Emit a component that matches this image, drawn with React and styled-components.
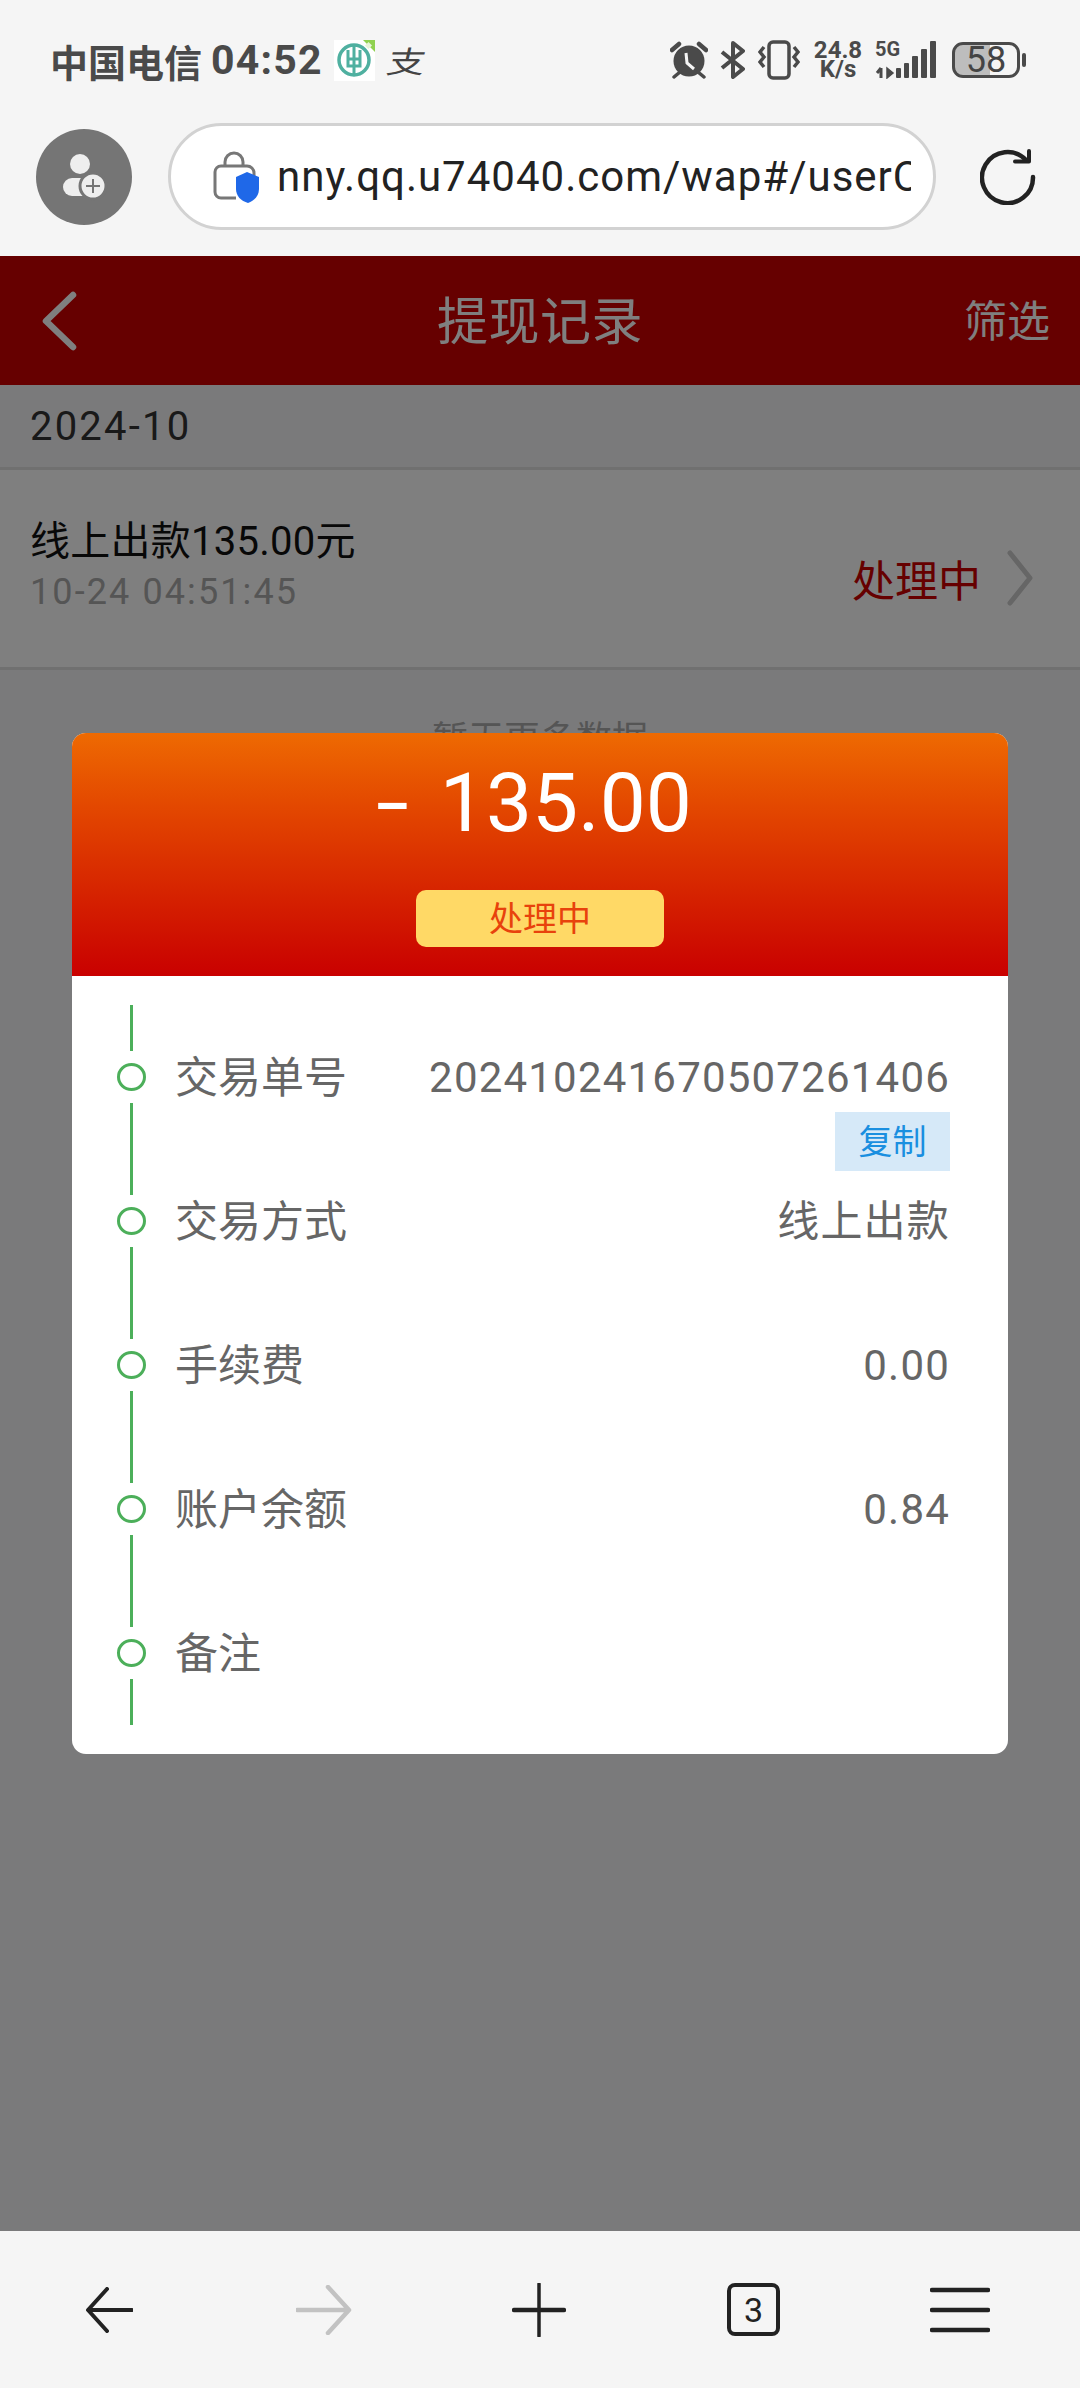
import React from "react";
import styled, { createGlobalStyle } from "styled-components";

const Global = createGlobalStyle`
  html, body { margin: 0; padding: 0; background: #f5f5f5; }
  * { box-sizing: border-box; }
`;

const Screen = styled.div`
  width: 1080px; height: 2388px; display: flex; flex-direction: column; overflow: hidden;
  font-family: Roboto, "Noto Sans CJK SC", sans-serif; background: #f5f5f5;
`;
const StatusBar = styled.div`
  height: 120px; display: flex; align-items: center; padding: 0 54px 0 50px; color: #4a4a4a;
`;
const Carrier = styled.span`font-size: 38px; font-weight: 700; white-space: nowrap;`;
const Clock = styled.span`font-size: 41px; font-weight: 700; margin-left: 9px; letter-spacing: 1.2px; white-space: nowrap;`;
const AppBadge = styled.span`
  width: 41px; height: 41px; margin-left: 11px; background: #fff; display: flex;
`;
const AppGlyph = styled.span`
  margin-left: 13px; font-size: 38px; line-height: 40px; color: #444; font-family: "Noto Sans CJK SC", sans-serif;
  display: inline-block; transform: scaleY(.8) skewX(-10deg);
`;
const StatusRight = styled.div`margin-left: auto; display: flex; align-items: center;`;
const Speed = styled.div`
  width: 52px; margin-left: 12px; text-align: center; font-size: 24px; line-height: 19px; font-weight: 700; color: #4a4a4a;
`;
const Net = styled.div`position: relative; width: 62px; height: 38px; margin-left: 11px;`;
const NetLabel = styled.span`
  position: absolute; left: 0; top: -2px; font-size: 20px; line-height: 20px; font-weight: 700; color: #4a4a4a;
`;
const Battery = styled.div`
  position: relative; width: 68px; height: 36px; margin-left: 15px; border: 3px solid #4a4a4a; border-radius: 11px;
  display: flex; align-items: center; justify-content: center; overflow: hidden;
  font-size: 36px; color: #444; font-weight: 400;
  background: linear-gradient(90deg, #bdbdbd 56%, transparent 56%);
`;
const BatteryNub = styled.span`width: 4px; height: 14px; margin-left: 2px; border-radius: 2px; background: #4a4a4a;`;

const BrowserBar = styled.div`
  height: 136px; display: flex; align-items: flex-start; padding: 3px 44px 0 36px;
`;
const Avatar = styled.div`
  width: 96px; height: 96px; margin-top: 6px; border-radius: 50%; background: #757575;
  display: flex; align-items: center; justify-content: center;
`;
const UrlPill = styled.div`
  width: 768px; height: 107px; margin-left: 36px; border: 3px solid #d2d2d2; border-radius: 54px; background: #fff;
  display: flex; align-items: center; padding: 0 21px 0 42px;
`;
const UrlText = styled.div`
  width: 634px; margin-left: 18px; overflow: hidden; white-space: nowrap; font-size: 42px; letter-spacing: 1px; color: #222;
`;
const Refresh = styled.div`margin-left: 44px; margin-top: 26px; display: flex;`;

const Page = styled.div`
  position: relative; flex: 1; display: flex; flex-direction: column; background: #f5f5f7; overflow: hidden;
`;
const Header = styled.div`
  height: 129px; background: #cc0000; display: grid; grid-template-columns: 1fr auto 1fr; align-items: center; color: #fff;
  padding: 0 30px 6px 30px;
`;
const Title = styled.div`font-size: 51px; text-align: center; letter-spacing: 0.5px;`;
const Filter = styled.div`font-size: 43px; text-align: right;`;
const BackSlot = styled.div`display: flex; padding: 6px 0 0 10px;`;
const MonthRow = styled.div`
  height: 85px; padding-left: 30px; display: flex; align-items: center; font-size: 40px; letter-spacing: 2.2px; color: #333;
  background: #f5f5f7; border-bottom: 3px solid #e0e0e0;
`;
const RecordRow = styled.div`
  height: 200px; padding: 0 47px 0 30px; display: flex; align-items: center; background: #fff; border-bottom: 3px solid #e0e0e0;
`;
const RecordMain = styled.div`flex: 1; display: flex; flex-direction: column; margin-top: -4px;`;
const RecordTitle = styled.div`font-size: 40px; line-height: 50px; letter-spacing: 0.25px; color: #111;`;
const RecordTime = styled.div`font-size: 36px; line-height: 50px; letter-spacing: 2.1px; color: #aaa;`;
const RecordStatus = styled.div`font-size: 43px; color: #cc0000; margin-right: 26px; margin-top: 18px;`;
const ChevronSlot = styled.div`display: flex; margin-top: 18px;`;
const NoMore = styled.div`
  margin-top: 45px; text-align: center; font-size: 36px; line-height: 50px; color: #aaa;
`;
const Overlay = styled.div`
  position: absolute; inset: 0; background: rgba(0,0,0,.5); display: flex; flex-direction: column; align-items: center; padding-top: 477px;
`;
const Dialog = styled.div`
  width: 936px; border-radius: 14px; overflow: hidden; background: #fff;
`;
const DialogHead = styled.div`
  height: 243px; padding-top: 20px; display: flex; flex-direction: column; align-items: center;
  background: linear-gradient(180deg, #ee6a02 0%, #e44a00 28%, #c90000 100%);
`;
const Amount = styled.div`display: flex; font-size: 82px; line-height: 100px; color: #fff; margin-left: -12px; white-space: pre;`;
const Minus = styled.span`display: inline-block; transform: scaleX(1.45); transform-origin: left center; margin-right: 41px;`;
const Tag = styled.div`
  width: 248px; height: 57px; margin-top: 37px; padding-bottom: 5px; border-radius: 10px; background: #ffd966; color: #e8420c;
  display: flex; align-items: center; justify-content: center; font-size: 34px;
`;
const DialogBody = styled.div`padding: 29px 58px 29px 45px;`;
const Row = styled.div`height: 144px; display: flex;`;
const Track = styled.div`width: 29px; display: flex; flex-direction: column; align-items: center;`;
const Line = styled.div`flex: 1; width: 3px; background: #4caf5a;`;
const Dot = styled.div`
  width: 29px; height: 28px; margin: 12px 0; border: 3px solid #4caf5a; border-radius: 50%;
`;
const RowContent = styled.div`
  flex: 1; margin-left: 29px; padding-top: 49px; display: flex; justify-content: space-between; align-items: flex-start;
`;
const Label = styled.div`font-size: 43px; line-height: 48px; color: #666;`;
const ValueCol = styled.div`display: flex; flex-direction: column; align-items: flex-end;`;
const Value = styled.div`font-size: 42px; line-height: 48px; color: #666; letter-spacing: 1.2px;`;
const CopyBtn = styled.div`
  width: 115px; height: 59px; margin-top: 10px; padding-bottom: 5px; background: #d6e9f8; color: #1a8fe0; font-size: 34px;
  display: flex; align-items: center; justify-content: center;
`;
const BottomNav = styled.div`
  height: 157px; background: #f5f5f5; display: flex; align-items: center; padding-left: 1px;
`;
const NavSlot = styled.div`
  width: ${p => p.$w || 215}px; display: flex; justify-content: center; align-items: center;
`;
const TabBox = styled.div`
  width: 53px; height: 53px; border: 4px solid #222; border-radius: 8px; display: flex; align-items: center; justify-content: center;
  font-size: 34px; color: #222;
`;

const BankLogo = () => (
  <svg width="41" height="41" viewBox="0 0 41 41">
    <circle cx="20" cy="20" r="15" fill="none" stroke="#4fb0a0" strokeWidth="3.5" />
    <path d="M20 5v30M14 10v16h12V10M14 19h12" fill="none" stroke="#4fb0a0" strokeWidth="3" />
    <path d="M29 0h12v12z" fill="#8fd14f" />
    <rect x="32" y="3" width="5" height="5" fill="#e8f5d8" transform="rotate(45 34.5 5.5)" />
  </svg>
);
const Alarm = () => (
  <svg width="38" height="38" viewBox="0 0 38 38">
    <circle cx="19" cy="20" r="15.500" fill="#4a4a4a" />
    <path d="M2 9 9 3M36 9 29 3" stroke="#4a4a4a" strokeWidth="4.500" strokeLinecap="round" />
    <path d="M4 36l6-5M34 36l-6-5" stroke="#4a4a4a" strokeWidth="3.500" strokeLinecap="round" />
    <path d="M16 12l1 10 7 6" fill="none" stroke="#f5f5f5" strokeWidth="3" />
  </svg>
);
const Bluetooth = () => (
  <svg width="25" height="38" viewBox="0 0 25 38" style={{ marginLeft: 12 }}>
    <path d="M2 11l21 17-10 8V2l10 8L2 27" fill="none" stroke="#4a4a4a" strokeWidth="4" strokeLinejoin="round" />
  </svg>
);
const Vibrate = () => (
  <svg width="42" height="40" viewBox="0 0 42 40" style={{ marginLeft: 13 }}>
    <rect x="11" y="2" width="20" height="36" rx="4" fill="none" stroke="#4a4a4a" strokeWidth="3.500" />
    <path d="M6 7 2 12l4 5-4 5 4 5M36 7l4 5-4 5 4 5-4 5" fill="none" stroke="#4a4a4a" strokeWidth="3.500" />
  </svg>
);
const Signal = () => (
  <svg width="62" height="38" viewBox="0 0 62 38" style={{ position: "absolute", left: 0, top: 0 }}>
    <path d="M6 27v10M2 32l4-5" fill="none" stroke="#4a4a4a" strokeWidth="3" />
    <path d="M12 27v10l6-5z" fill="#4a4a4a" stroke="#4a4a4a" strokeWidth="1.500" />
    <rect x="21" y="27" width="5" height="10" rx="1" fill="#4a4a4a" />
    <rect x="29" y="22" width="5" height="15" rx="1" fill="#4a4a4a" />
    <rect x="37" y="15" width="6" height="22" rx="1" fill="#4a4a4a" />
    <rect x="46" y="8" width="6" height="29" rx="1" fill="#4a4a4a" />
    <rect x="55" y="0" width="6" height="37" rx="1" fill="#4a4a4a" />
  </svg>
);
const UserAdd = () => (
  <svg width="48" height="48" viewBox="0 0 48 48">
    <circle cx="20" cy="11" r="10" fill="#eee" />
    <rect x="3" y="25" width="36" height="18" rx="9" fill="#eee" />
    <circle cx="33" cy="33" r="13" fill="#eee" stroke="#757575" strokeWidth="3" />
    <path d="M33 26v14M26 33h14" stroke="#757575" strokeWidth="2" />
  </svg>
);
const LockShield = () => (
  <svg width="46" height="52" viewBox="0 0 46 52">
    <path d="M2 21a6 6 0 0 1 6-6h26a7 7 0 0 1 7 7v8M23 47H8a6 6 0 0 1-6-6V21" fill="none" stroke="#777" strokeWidth="3" />
    <path d="M12 15v-4a9 9 0 0 1 18 0v4" fill="none" stroke="#777" strokeWidth="3" />
    <path d="M34 21l12 5v12c0 7-5 12-11 14-7-2-12-7-12-14V26z" fill="#1f68e8" />
  </svg>
);
const RefreshIcon = () => (
  <svg width="56" height="56" viewBox="0 0 56 56">
    <path d="M46 11A25.500 25.500 0 1 0 53 28" fill="none" stroke="#222" strokeWidth="4.500" strokeLinecap="round" />
    <path d="M35 12.500h14V2" fill="none" stroke="#222" strokeWidth="4" strokeLinecap="round" strokeLinejoin="round" />
  </svg>
);
const Back = () => (
  <svg width="38" height="62" viewBox="0 0 38 62">
    <path d="M33 5 6 31l27 26" fill="none" stroke="#fff" strokeWidth="6.500" strokeLinecap="round" strokeLinejoin="round" />
  </svg>
);
const Chevron = () => (
  <svg width="26" height="56" viewBox="0 0 26 56">
    <path d="M3 3l20 25L3 53" fill="none" stroke="#ccc" strokeWidth="5" strokeLinecap="round" strokeLinejoin="round" />
  </svg>
);
const ArrowLeft = () => (
  <svg width="48" height="46" viewBox="0 0 48 46">
    <path d="M47 23H4M22 2 3 23l19 21" fill="none" stroke="#222" strokeWidth="4" strokeLinecap="round" strokeLinejoin="round" />
  </svg>
);
const ArrowRight = () => (
  <svg width="56" height="50" viewBox="0 0 56 50">
    <path d="M1 25h51M32 2l21 23-21 23" fill="none" stroke="#c2c2c2" strokeWidth="4.500" strokeLinecap="round" strokeLinejoin="round" />
  </svg>
);
const Plus = () => (
  <svg width="54" height="54" viewBox="0 0 54 54">
    <path d="M27 1v52" stroke="#222" strokeWidth="3.500" strokeLinecap="round" />
    <path d="M2 27h50" stroke="#222" strokeWidth="4.500" strokeLinecap="round" />
  </svg>
);
const Menu = () => (
  <svg width="60" height="46" viewBox="0 0 60 46">
    <path d="M2 3h56M2 23h56M2 43h56" stroke="#222" strokeWidth="4.500" strokeLinecap="round" />
  </svg>
);

const rows = [
  { label: "交易单号", value: "202410241670507261406", copy: true },
  { label: "交易方式", value: "线上出款" },
  { label: "手续费", value: "0.00" },
  { label: "账户余额", value: "0.84" },
  { label: "备注", value: "" },
];

export default function App() {
  return (
    <Screen>
      <Global />
      <StatusBar>
        <Carrier>中国电信</Carrier>
        <Clock>04:52</Clock>
        <AppBadge><BankLogo /></AppBadge>
        <AppGlyph>支</AppGlyph>
        <StatusRight>
          <Alarm />
          <Bluetooth />
          <Vibrate />
          <Speed>24.8<br />K/s</Speed>
          <Net><Signal /><NetLabel>5G</NetLabel></Net>
          <Battery>58</Battery>
          <BatteryNub />
        </StatusRight>
      </StatusBar>
      <BrowserBar>
        <Avatar><UserAdd /></Avatar>
        <UrlPill>
          <LockShield />
          <UrlText>nny.qq.u74040.com/wap#/userCenter</UrlText>
        </UrlPill>
        <Refresh><RefreshIcon /></Refresh>
      </BrowserBar>
      <Page>
        <Header>
          <BackSlot><Back /></BackSlot>
          <Title>提现记录</Title>
          <Filter>筛选</Filter>
        </Header>
        <MonthRow>2024-10</MonthRow>
        <RecordRow>
          <RecordMain>
            <RecordTitle>线上出款135.00元</RecordTitle>
            <RecordTime>10-24 04:51:45</RecordTime>
          </RecordMain>
          <RecordStatus>处理中</RecordStatus>
          <ChevronSlot><Chevron /></ChevronSlot>
        </RecordRow>
        <NoMore>暂无更多数据</NoMore>
        <Overlay>
          <Dialog>
            <DialogHead>
              <Amount><Minus>-</Minus>135.00</Amount>
              <Tag>处理中</Tag>
            </DialogHead>
            <DialogBody>
              {rows.map(r => (
                <Row key={r.label}>
                  <Track><Line /><Dot /><Line /></Track>
                  <RowContent>
                    <Label>{r.label}</Label>
                    <ValueCol>
                      <Value>{r.value}</Value>
                      {r.copy && <CopyBtn>复制</CopyBtn>}
                    </ValueCol>
                  </RowContent>
                </Row>
              ))}
            </DialogBody>
          </Dialog>
        </Overlay>
      </Page>
      <BottomNav>
        <NavSlot><ArrowLeft /></NavSlot>
        <NavSlot><ArrowRight /></NavSlot>
        <NavSlot><Plus /></NavSlot>
        <NavSlot><TabBox>3</TabBox></NavSlot>
        <NavSlot $w={197}><Menu /></NavSlot>
      </BottomNav>
    </Screen>
  );
}
